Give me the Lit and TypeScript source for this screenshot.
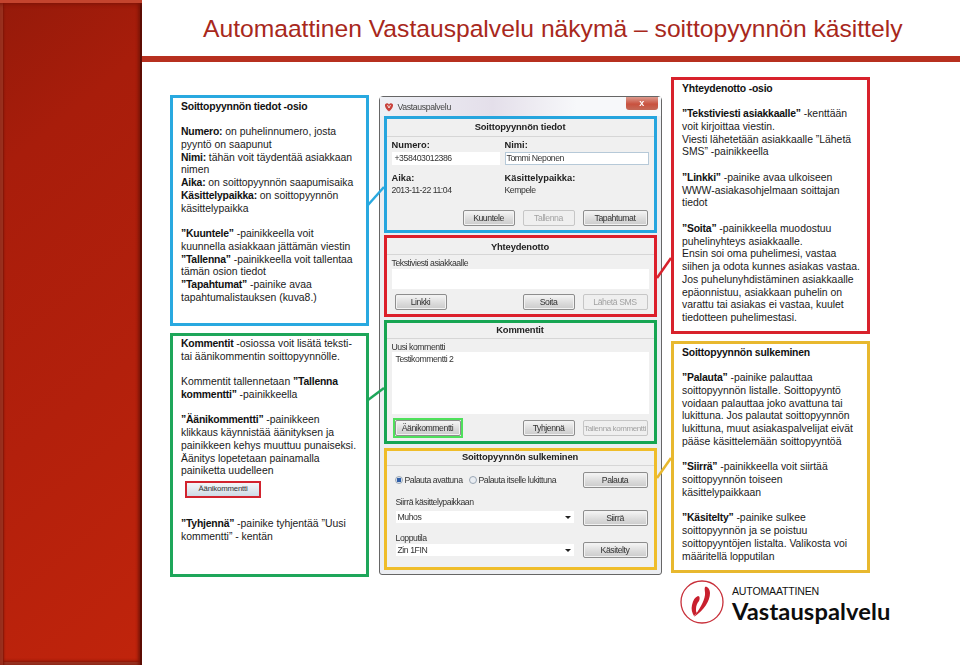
import { LitElement, html, css, svg } from "lit";
import { customElement } from "lit/decorators.js";

@customElement("app-root")
export class AppRoot extends LitElement {
  static styles = css`
    :host { display: block; width: 960px; height: 665px; overflow: hidden; background: #fff; position: relative; font-family: "Liberation Sans", sans-serif; color: #1a1a1a; }
    .slide { display: grid; grid-template-columns: 142px 1fr; height: 665px; }
    .side { background: linear-gradient(140deg, #951a0a 0%, #a81d0b 22%, #b3200c 60%, #c0240c 100%);
      box-shadow: inset 0 3px 0 #c4442e, inset 0 7px 4px -3px #7a1206, inset -2px 0 0 #5c0d04, inset -5px 0 3px -1px #7d1507, inset 3px 0 0 #99301e, inset 5px 0 2px -1px #7d1507, inset 0 -3px 0 #96301f, inset 0 -7px 3px -3px #7d1507; }
    .main { display: flex; flex-direction: column; min-width: 0; }
    h1 { margin: 0; height: 56px; box-sizing: border-box; padding: 15px 0 0 61px; font: 400 24.65px/28px "Liberation Sans", sans-serif; color: #a8281c; white-space: nowrap; }
    .rule { height: 6px; background: #b7301f; }
    .body { display: grid; grid-template-columns: 199px 283px 199px; column-gap: 9.5px; padding-left: 28px; }
    .col { display: flex; flex-direction: column; }
    .left { padding-top: 33px; gap: 7px; }
    .mid { padding-top: 34px; }
    .right { padding-top: 15px; gap: 7px; }
    .note { box-sizing: border-box; border: 3px solid; padding: 2.6px 0 0 8px; font-size: 10.4px; line-height: 12.75px; white-space: nowrap; background: #fff; overflow: hidden; }
    .note b { font-weight: 700; letter-spacing: -0.2px; color: #111; }
    .sp { height: 12.75px; }
    .blue { border-color: #29a9e0; height: 231px; }
    .green { border-color: #1ea65a; height: 244px; padding-top: 1.8px; }
    .red { border-color: #d8222c; height: 257px; }
    .yellow { border-color: #e8b82e; height: 232px; }
    .shot { height: 24px; margin: 3px 0 0 4px; display: flex; align-items: flex-start; }
    .shot span { display: flex; align-items: center; justify-content: center; width: 76px; height: 17px; box-sizing: border-box; border: 2px solid #d2232e; background: linear-gradient(#f4f6f8, #cfdbe6); font-size: 7.8px; letter-spacing: -0.2px; color: #333; }

    .win { position: relative; box-sizing: border-box; width: 283px; height: 479px; border: 1px solid #666; border-radius: 4px 4px 3px 3px; background: #eceef2; padding: 0 4px 4px 4px; display: flex; flex-direction: column; filter: blur(0.35px); font-family: "Liberation Sans", sans-serif; font-size: 8.7px; letter-spacing: -0.45px; color: #333; }
    .tbar { height: 19px; flex: none; display: flex; align-items: center; gap: 4px; font-size: 8.7px; letter-spacing: -0.35px; color: #444; background: linear-gradient(90deg, #eef0f5 0, #e4dfea 40%, #f7f8fa 70%, #f7f8fa 100%); margin: 0 -4px; padding-left: 4px; }
    .close { margin-left: auto; margin-right: 3px; align-self: flex-start; width: 32px; height: 13px; border-radius: 0 0 3px 3px; background: linear-gradient(#dd9a8e, #c9523f 55%, #c46a58); color: #fff; display: flex; align-items: center; justify-content: center; font: 700 9px/1 "Liberation Sans", sans-serif; }
    .sec { box-sizing: border-box; border: 3px solid; background: #f0f0f0; display: flex; flex-direction: column; padding: 0 5px; flex: none; }
    .s1 { height: 117px; border-color: #26a5de; }
    .s2 { height: 82px; margin-top: 2px; border-color: #dc1f2b; }
    .s3 { height: 124px; margin-top: 3px; border-color: #16a552; }
    .s4 { height: 122px; margin-top: 4px; border-color: #efbd2a; }
    .hd { margin: 0 -5px; border-bottom: 1px solid #d6d6d6; text-align: center; font: 700 9.4px/1 "Liberation Sans", sans-serif; letter-spacing: -0.15px; color: #222; box-sizing: border-box; }
    .s1 .hd { height: 18px; padding-top: 3px; }
    .s2 .hd { height: 17px; padding-top: 4px; }
    .s3 .hd { height: 16px; padding-top: 2px; }
    .s4 .hd { height: 15px; padding-top: 1px; }
    .lbl { font-weight: 700; font-size: 9.3px; line-height: 11px; color: #222; letter-spacing: 0; }
    .two { display: grid; grid-template-columns: 113px 144px; }
    .t1 { margin-top: 3px; } .t2 { margin-top: 1px; } .t3 { margin-top: 8px; }
    .inp { box-sizing: border-box; background: #fff; height: 13px; line-height: 13px; padding-left: 3px; white-space: nowrap; }
    .inp.nm { border: 1px solid #b6c9d8; line-height: 11px; padding-left: 1px; }
    .inp.no { width: 108px; }
    .val { line-height: 11px; margin-top: 1px; }
    .btns { display: grid; grid-template-columns: 52px 52px 65px; column-gap: 8px; justify-content: end; margin-top: 14px; padding-right: 1px; }
    .btns2 { display: grid; grid-template-columns: 52px 65px; column-gap: 8px; }
    .btn { box-sizing: border-box; height: 16px; border: 1px solid #8d8d8d; border-radius: 2px; background: linear-gradient(#f6f6f6, #dcdcdc 55%, #cbcbcb); display: flex; align-items: center; justify-content: center; white-space: nowrap; color: #333; box-shadow: inset 0 0 0 1px #f2f2f2; }
    .btn.off { border-color: #c6c6c6; background: #efefef; color: #a2a2a2; box-shadow: none; }
    .btn.small { font-size: 8px; letter-spacing: -0.4px; }
    .btn.w52 { width: 52px; }
    .row { display: flex; justify-content: space-between; padding: 0 1px 0 3px; }
    .r2 { margin-top: 5px; } .r3 { margin-top: 6px; }
    .cap { line-height: 10px; white-space: nowrap; margin-top: 3px; }
    .ta { background: #fff; box-sizing: border-box; padding: 2px 4px; }
    .ta.a { height: 20px; margin-top: 1px; }
    .ta.b { height: 62px; }
    .ring { box-sizing: border-box; width: 70px; height: 20px; border: 2px solid #4fe05c; display: flex; margin: -2px 0 0 -2px; }
    .ring .btn { flex: 1; height: 16px; }
    .fr { display: grid; grid-template-columns: 178px 65px; column-gap: 9px; align-items: start; padding-left: 4px; }
    .fr1 { margin-top: 6px; } .fr2 { margin-top: 9px; } .fr3 { margin-top: 7px; }
    .fr .cap { margin-top: 0; }
    .radios { display: flex; align-items: center; height: 16px; white-space: nowrap; margin-left: -1px; }
    .rd { width: 6px; height: 6px; border-radius: 50%; border: 1px solid #9aa6b4; background: #e9edf2; margin-right: 2px; flex: none; }
    .rd.on { background: radial-gradient(#2f5fa8 50%, #dfe6f0 60%); }
    .rd.next { margin-left: 6px; }
    .sel { box-sizing: border-box; background: #fff; height: 12px; line-height: 12px; padding-left: 2px; position: relative; }
    .sel::after { content: ""; position: absolute; right: 3px; top: 5px; border: 3px solid transparent; border-top: 3px solid #222; border-bottom: 0; }
    .sel.m2 { margin-top: 4px; } .sel.m3 { margin-top: 1px; }
    .btn.b2 { margin-top: 13px; } .btn.b3 { margin-top: 9px; }
    .wire { position: absolute; inset: 0; width: 960px; height: 665px; pointer-events: none; }
    .logo { display: flex; align-items: flex-start; gap: 8px; margin-left: 9px; width: 230px; }
    .ltxt { display: flex; flex-direction: column; margin-top: 6px; }
    .l1 { font: 400 10.6px/10px "Liberation Sans", sans-serif; color: #111; letter-spacing: -0.2px; }
    .l2 { font: 700 23.7px/22px "Lato", sans-serif; color: #0d0d0d; letter-spacing: 0.1px; white-space: nowrap; margin-top: 4px; }
  `;

  note(lines: any[]) {
    return lines.map((l) => (l === "" ? html`<div class="sp"></div>` : html`<div>${l}</div>`));
  }

  render() {
    const L = svg`
      <line x1="368" y1="205" x2="384" y2="187" stroke="#29a9e0" stroke-width="2.5"/>
      <line x1="368" y1="400" x2="384" y2="388" stroke="#1ea65a" stroke-width="2.5"/>
      <line x1="657" y1="278" x2="671" y2="258" stroke="#d8222c" stroke-width="2.5"/>
      <line x1="657" y1="478" x2="671" y2="458" stroke="#e8b82e" stroke-width="2.5"/>`;
    return html`
      <div class="slide">
        <div class="side"></div>
        <div class="main">
          <h1>Automaattinen Vastauspalvelu näkymä – soittopyynnön käsittely</h1>
          <div class="rule"></div>
          <div class="body">
            <div class="col left">
              <div class="note blue">${this.note([
                html`<b>Soittopyynnön tiedot -osio</b>`, "",
                html`<b>Numero:</b> on puhelinnumero, josta`, "pyyntö on saapunut",
                html`<b>Nimi:</b> tähän voit täydentää asiakkaan`, "nimen",
                html`<b>Aika:</b> on soittopyynnön saapumisaika`,
                html`<b>Käsittelypaikka:</b> on soittopyynnön`, "käsittelypaikka", "",
                html`<b>”Kuuntele”</b> -painikkeella voit`, "kuunnella asiakkaan jättämän viestin",
                html`<b>”Tallenna”</b> -painikkeella voit tallentaa`, "tämän osion tiedot",
                html`<b>”Tapahtumat”</b> -painike avaa`, "tapahtumalistauksen (kuva8.)",
              ])}</div>
              <div class="note green">
                ${this.note([
                  html`<b>Kommentit</b> -osiossa voit lisätä teksti-`, "tai äänikommentin soittopyynnölle.", "",
                  html`Kommentit tallennetaan <b>”Tallenna</b>`, html`<b>kommentti”</b> -painikkeella`, "",
                  html`<b>”Äänikommentti”</b> -painikkeen`, "klikkaus käynnistää äänityksen ja", "painikkeen kehys muuttuu punaiseksi.", "Äänitys lopetetaan painamalla", "painiketta uudelleen",
                ])}
                <div class="shot"><span>Äänikommentti</span></div>
                <div class="sp"></div>
                ${this.note([html`<b>”Tyhjennä”</b> -painike tyhjentää ”Uusi`, "kommentti” - kentän"])}
              </div>
            </div>

            <div class="col mid">
              <div class="win">
                <div class="tbar">
                  <svg width="10" height="10" viewBox="0 0 10 10"><path d="M1 2.5 C2.5 0.8 4 1.2 5 2.4 C6 1.2 7.5 0.8 9 2.5 C9.4 5 7 8 5 9.5 C3 8 0.6 5 1 2.5Z" fill="#c8423c"/><path d="M3.5 3 L5 6 L6.5 3" fill="none" stroke="#fff" stroke-width=".8"/></svg>
                  <span>Vastauspalvelu</span>
                  <span class="close">x</span>
                </div>
                <div class="sec s1">
                  <div class="hd">Soittopyynnön tiedot</div>
                  <div class="two t1"><div class="lbl">Numero:</div><div class="lbl">Nimi:</div></div>
                  <div class="two t2"><div class="inp no">+358403012386</div><div class="inp nm">Tommi Neponen</div></div>
                  <div class="two t3"><div class="lbl">Aika:</div><div class="lbl">Käsittelypaikka:</div></div>
                  <div class="two"><div class="val">2013-11-22 11:04</div><div class="val">Kempele</div></div>
                  <div class="btns"><div class="btn">Kuuntele</div><div class="btn off">Tallenna</div><div class="btn">Tapahtumat</div></div>
                </div>
                <div class="sec s2">
                  <div class="hd">Yhteydenotto</div>
                  <div class="cap">Tekstiviesti asiakkaalle</div>
                  <div class="ta a"></div>
                  <div class="row r2">
                    <div class="btn w52">Linkki</div>
                    <div class="btns2"><div class="btn">Soita</div><div class="btn off">Lähetä SMS</div></div>
                  </div>
                </div>
                <div class="sec s3">
                  <div class="hd">Kommentit</div>
                  <div class="cap">Uusi kommentti</div>
                  <div class="ta b">Testikommentti 2</div>
                  <div class="row r3">
                    <div class="ring"><div class="btn">Äänikommentti</div></div>
                    <div class="btns2"><div class="btn">Tyhjennä</div><div class="btn off small">Tallenna kommentti</div></div>
                  </div>
                </div>
                <div class="sec s4">
                  <div class="hd">Soittopyynnön sulkeminen</div>
                  <div class="fr fr1">
                    <div class="radios"><span class="rd on"></span>Palauta avattuna<span class="rd next"></span>Palauta itselle lukittuna</div>
                    <div class="btn">Palauta</div>
                  </div>
                  <div class="fr fr2">
                    <div><div class="cap">Siirrä käsittelypaikkaan</div><div class="sel m2">Muhos</div></div>
                    <div class="btn b2">Siirrä</div>
                  </div>
                  <div class="fr fr3">
                    <div><div class="cap">Lopputila</div><div class="sel m3">Zin 1FIN</div></div>
                    <div class="btn b3">Käsitelty</div>
                  </div>
                </div>
              </div>
            </div>

            <div class="col right">
              <div class="note red">${this.note([
                html`<b>Yhteydenotto -osio</b>`, "",
                html`<b>”Tekstiviesti asiakkaalle”</b> -kenttään`, "voit kirjoittaa viestin.", "Viesti lähetetään asiakkaalle ”Lähetä", "SMS” -painikkeella", "",
                html`<b>”Linkki”</b> -painike avaa ulkoiseen`, "WWW-asiakasohjelmaan soittajan", "tiedot", "",
                html`<b>”Soita”</b> -painikkeella muodostuu`, "puhelinyhteys asiakkaalle.", "Ensin soi oma puhelimesi, vastaa", "siihen ja odota kunnes asiakas vastaa.", "Jos puhelunyhdistäminen asiakkaalle", "epäonnistuu, asiakkaan puhelin on", "varattu tai asiakas ei vastaa, kuulet", "tiedotteen puhelimestasi.",
              ])}</div>
              <div class="note yellow">${this.note([
                html`<b>Soittopyynnön sulkeminen</b>`, "",
                html`<b>”Palauta”</b> -painike palauttaa`, "soittopyynnön listalle. Soittopyyntö", "voidaan palauttaa joko avattuna tai", "lukittuna. Jos palautat soittopyynnön", "lukittuna, muut asiakaspalvelijat eivät", "pääse käsittelemään soittopyyntöä", "",
                html`<b>”Siirrä”</b> -painikkeella voit siirtää`, "soittopyynnön toiseen", "käsittelypaikkaan", "",
                html`<b>”Käsitelty”</b> -painike sulkee`, "soittopyynnön ja se poistuu", "soittopyyntöjen listalta. Valikosta voi", "määritellä lopputilan",
              ])}</div>
              <div class="logo">
                <svg width="44" height="44" viewBox="0 0 44 44">
                  <circle cx="22" cy="22" r="21" fill="#fff" stroke="#c8303a" stroke-width="1.3"/>
                  <path d="M25 7 C27 6 30 9 30 13 C30 21 24 30 14 37 C19 30 24 22 25 15 C25.5 12 24 9 25 7Z" fill="#c8202e"/>
                  <path d="M18 16 C20 16 20 19 19 21 C17 23 16 26 16 29 C16 31 16 32 17 33 L14 36 C12 33 11 29 12 25 C13 20 15 17 18 16Z" fill="#c8202e"/>
                </svg>
                <div class="ltxt"><span class="l1">AUTOMAATTINEN</span><span class="l2">Vastauspalvelu</span></div>
              </div>
            </div>
          </div>
        </div>
      </div>
      <svg class="wire" viewBox="0 0 960 665">${L}</svg>
    `;
  }
}
